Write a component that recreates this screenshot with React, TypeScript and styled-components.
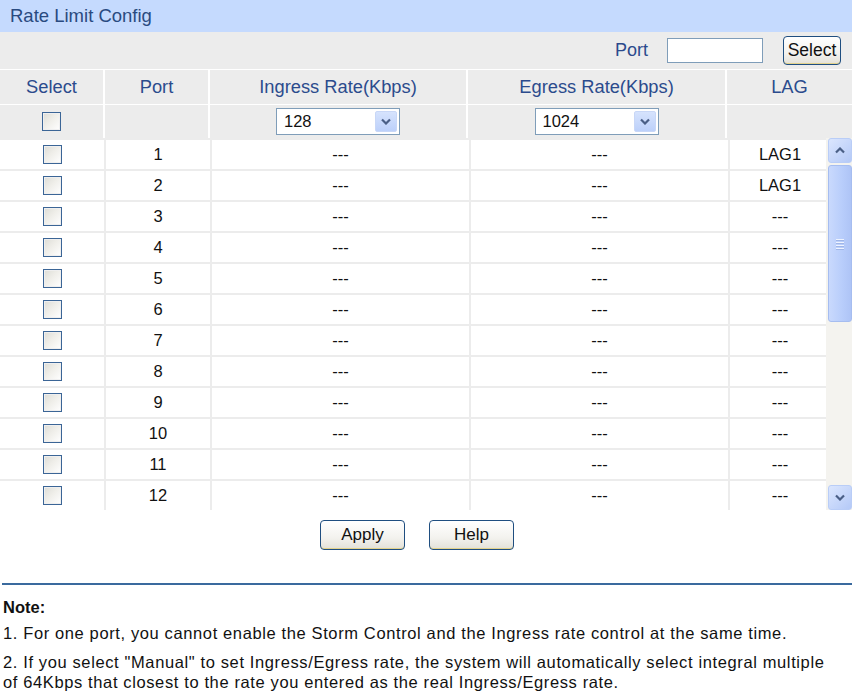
import React from "react";
import styled, { createGlobalStyle } from "styled-components";

const GlobalStyle = createGlobalStyle`
  html, body { margin: 0; padding: 0; background: #ffffff; }
  body { font-family: "Liberation Sans", Arial, sans-serif; color: #111; }
  * { box-sizing: border-box; }
`;

const Page = styled.div`
  width: 852px;
  display: flex;
  flex-direction: column;
`;

const TitleBar = styled.div`
  height: 32px;
  background: #c5dafe;
  color: #2a4a80;
  font-size: 18.5px;
  display: flex;
  align-items: center;
  padding-left: 10px;
`;

const Panel = styled.div`
  background: #ececec;
  display: flex;
  flex-direction: column;
`;

const PortBar = styled.div`
  height: 38px;
  display: flex;
  align-items: center;
  justify-content: flex-end;
  padding-right: 11px;
  border-bottom: 1px solid #ffffff;
`;

const PortLabel = styled.span`
  color: #2b4a8c;
  font-size: 18px;
  margin-right: 19px;
`;

const PortInput = styled.input`
  width: 96px;
  height: 25px;
  border: 1px solid #7f9db9;
  background: #fff;
  margin: 0 20px 0 0;
  padding: 0;
`;

const XpButton = styled.button<{ $w: number; $h: number; $size?: number }>`
  width: ${(p) => p.$w}px;
  height: ${(p) => p.$h}px;
  border: 1px solid #1f4e80;
  border-radius: 4px;
  background: linear-gradient(#ffffff, #f3f2ee 60%, #e3e1d8);
  box-shadow: inset 0 -1px 0 #e2d28c;
  font-family: "Liberation Sans", Arial, sans-serif;
  font-size: ${(p) => p.$size ?? 17}px;
  color: #111;
  padding: 0;
  display: flex;
  align-items: center;
  justify-content: center;
`;

const GridRow = styled.div<{ $h: number; $last?: boolean }>`
  display: grid;
  grid-template-columns: 105px 105px 258px 259px 125px;
  height: ${(p) => p.$h}px;
  border-bottom: ${(p) => (p.$last ? "0" : "1px solid #ffffff")};
`;

const HeadCell = styled.div`
  display: flex;
  align-items: center;
  justify-content: center;
  color: #2b4b8d;
  font-size: 18.3px;
  border-right: 2px solid #ffffff;
  &:last-child { border-right: 0; }
`;

const FilterCell = styled(HeadCell)``;

const Check = styled.span`
  display: inline-block;
  width: 19px;
  height: 19px;
  border: 1px solid #3b6596;
  box-shadow: inset 0 0 0 1px #efefef;
  background: linear-gradient(135deg, #dcdcd6 0%, #efeee9 45%, #ffffff 100%);
`;

const SelectBox = styled.div`
  width: 124px;
  height: 27px;
  border: 1px solid #7f9db9;
  background: #ffffff;
  display: flex;
  align-items: center;
  justify-content: space-between;
  padding: 0 2px 0 7px;
  font-size: 16.5px;
  color: #111;
`;

const DropBtn = styled.span`
  width: 22px;
  height: 21px;
  border-radius: 2px;
  background: linear-gradient(#d6e3fd, #bcd0fa);
  border: 1px solid #c8d7f7;
  display: flex;
  align-items: center;
  justify-content: center;
`;

const DataArea = styled.div`
  display: flex;
  height: 372px;
  background: #ececec;
`;

const Rows = styled.div`
  width: 826px;
  padding-top: 2px;
  display: flex;
  flex-direction: column;
  gap: 2px;
`;

const DataRow = styled.div`
  display: grid;
  grid-template-columns: 104px 104px 257px 257px 100px;
  column-gap: 2px;
  height: 29px;
  flex: none;
`;

const DataCell = styled.div`
  background: #ffffff;
  display: flex;
  align-items: center;
  justify-content: center;
  font-size: 16.5px;
  color: #111;
`;

const ScrollTrack = styled.div`
  width: 26px;
  height: 372px;
  background: #f4f3ef;
  display: flex;
  flex-direction: column;
  padding: 0 0 0 2px;
`;

const ScrollBtn = styled.div`
  height: 25px;
  border-radius: 3px;
  border: 1px solid #b9cdf7;
  background: linear-gradient(135deg, #dbe6fe, #b4c9f7);
  display: flex;
  align-items: center;
  justify-content: center;
  flex: none;
`;

const Thumb = styled.div`
  margin-top: 2px;
  height: 157px;
  border-radius: 3px;
  border: 1px solid #a6bdf0;
  background: linear-gradient(90deg, #c9d9fd, #b8cdfb 60%, #aec4f6);
  display: flex;
  align-items: center;
  justify-content: center;
  flex: none;
`;

const Grip = styled.div`
  display: flex;
  flex-direction: column;
  gap: 2px;
  & > span {
    width: 8px;
    height: 1px;
    background: #eef3ff;
    box-shadow: 0 1px 0 #9fb6e8;
  }
`;

const Spacer = styled.div`
  flex: 1;
`;

const ActionBar = styled.div`
  display: flex;
  justify-content: center;
  align-items: flex-start;
  gap: 24px;
  padding: 10px 18px 0 0;
  height: 73px;
`;

const Divider = styled.div`
  height: 2px;
  background: #3a6a9e;
  margin-left: 2px;
`;

const Notes = styled.div`
  padding: 12px 12px 0 3px;
  font-size: 16.5px;
  letter-spacing: 0.62px;
  color: #111;
`;

const NoteTitle = styled.div`
  font-weight: bold;
  font-size: 16.5px;
  letter-spacing: 0;
  line-height: 20px;
  margin-bottom: 6px;
`;

const NoteLine = styled.p`
  margin: 0 0 9px 0;
  line-height: 20px;
`;

const Chevron = ({ up }: { up?: boolean }) => (
  <svg width="10" height="7" viewBox="0 0 10 7">
    <path
      d={up ? "M1 5.5 L5 1.5 L9 5.5" : "M1 1.5 L5 5.5 L9 1.5"}
      fill="none"
      stroke="#4a5f86"
      strokeWidth="2.2"
    />
  </svg>
);

const ports = Array.from({ length: 12 }, (_, i) => ({
  port: i + 1,
  ingress: "---",
  egress: "---",
  lag: i < 2 ? "LAG1" : "---",
}));

export default function App() {
  return (
    <Page>
      <GlobalStyle />
      <TitleBar>Rate Limit Config</TitleBar>
      <Panel>
        <PortBar>
          <PortLabel>Port</PortLabel>
          <PortInput />
          <XpButton $w={58} $h={29} $size={17.5}>Select</XpButton>
        </PortBar>
        <GridRow $h={35}>
          <HeadCell>Select</HeadCell>
          <HeadCell>Port</HeadCell>
          <HeadCell>Ingress Rate(Kbps)</HeadCell>
          <HeadCell>Egress Rate(Kbps)</HeadCell>
          <HeadCell>LAG</HeadCell>
        </GridRow>
        <GridRow $h={33} $last>
          <FilterCell><Check /></FilterCell>
          <FilterCell />
          <FilterCell>
            <SelectBox>128<DropBtn><Chevron /></DropBtn></SelectBox>
          </FilterCell>
          <FilterCell>
            <SelectBox>1024<DropBtn><Chevron /></DropBtn></SelectBox>
          </FilterCell>
          <FilterCell />
        </GridRow>
        <DataArea>
          <Rows>
            {ports.map((p) => (
              <DataRow key={p.port}>
                <DataCell><Check /></DataCell>
                <DataCell>{p.port}</DataCell>
                <DataCell>{p.ingress}</DataCell>
                <DataCell>{p.egress}</DataCell>
                <DataCell>{p.lag}</DataCell>
              </DataRow>
            ))}
          </Rows>
          <ScrollTrack>
            <ScrollBtn><Chevron up /></ScrollBtn>
            <Thumb>
              <Grip><span /><span /><span /><span /></Grip>
            </Thumb>
            <Spacer />
            <ScrollBtn><Chevron /></ScrollBtn>
          </ScrollTrack>
        </DataArea>
      </Panel>
      <ActionBar>
        <XpButton $w={85} $h={30}>Apply</XpButton>
        <XpButton $w={85} $h={30}>Help</XpButton>
      </ActionBar>
      <Divider />
      <Notes>
        <NoteTitle>Note:</NoteTitle>
        <NoteLine>1. For one port, you cannot enable the Storm Control and the Ingress rate control at the same time.</NoteLine>
        <NoteLine>2. If you select "Manual" to set Ingress/Egress rate, the system will automatically select integral multiple of 64Kbps that closest to the rate you entered as the real Ingress/Egress rate.</NoteLine>
      </Notes>
    </Page>
  );
}
